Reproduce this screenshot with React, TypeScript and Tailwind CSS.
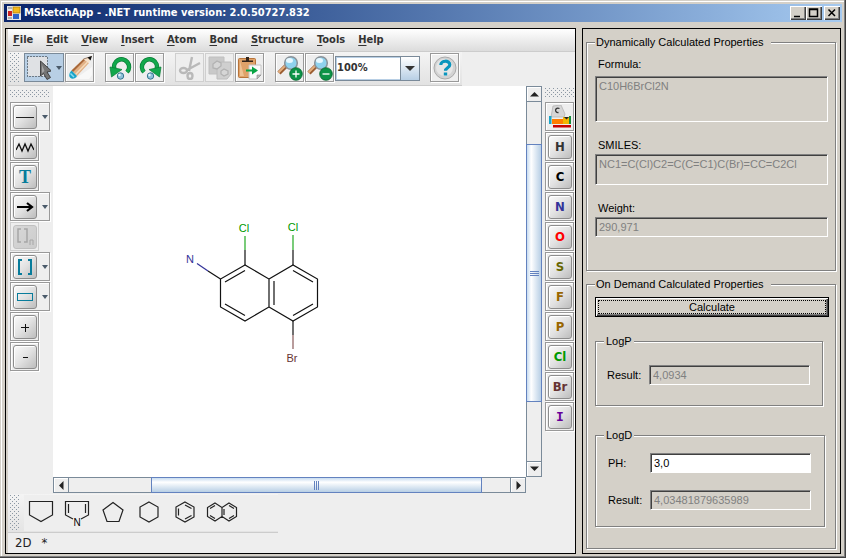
import type { ReactNode } from "react";

const UI = "font-['DejaVu_Sans_Condensed','DejaVu_Sans',sans-serif]";
const DOTS =
  "[background-image:conic-gradient(from_0deg_at_1px_1px,transparent_75%,#8b97a3_0),conic-gradient(from_0deg_at_1px_1px,transparent_75%,#8b97a3_0)] [background-size:4px_4px] [background-position:0_0,2px_2px]";
const SUNKEN =
  "block w-full border border-t-[#808080] border-l-[#808080] border-r-white border-b-white shadow-[inset_1px_1px_0_#404040] rounded-none outline-none resize-none text-[11px] leading-4 px-[3px] py-px";
const GROUP =
  "border border-[#808080] shadow-[inset_1px_1px_0_#fff,1px_1px_0_#fff]";

function ToolButton({
  label,
  children,
  disabled,
  menu,
  active,
}: {
  label: string;
  children: ReactNode;
  disabled?: boolean;
  menu?: boolean;
  active?: boolean;
}) {
  const look = active
    ? "border-[#7a8a99] bg-[#b8cfe5]"
    : disabled
      ? "border-[#cfcfcf] bg-[#eeeeee]"
      : "border-[#999999] bg-[#eeeeee] shadow-[1px_1px_0_#fff,inset_1px_1px_0_#fff]";
  return (
    <button
      aria-label={label}
      disabled={disabled}
      className={`flex h-[29px] shrink-0 items-center border pl-0.5 ${menu ? "w-10" : "w-[29px]"} ${look}`}
    >
      <span className="flex size-6 shrink-0 items-center justify-center">{children}</span>
      {menu && (
        <svg className="ml-[5px] shrink-0" width="6" height="4" viewBox="0 0 6 4">
          <path d="M0 0h6L3 4z" fill="#4a5a6a" />
        </svg>
      )}
    </button>
  );
}

function Cap({ children, disabled }: { children: ReactNode; disabled?: boolean }) {
  return (
    <span
      className={`flex size-6 items-center justify-center rounded-[3px] border bg-linear-to-br ${
        disabled
          ? "border-[#c0c0c0] from-[#d8d8d8] to-[#cccccc]"
          : "border-[#8c8c8c] from-[#fbfbfb] via-[#e2e2e2] to-[#bdbdbd] shadow-[inset_1px_1px_0_#fff]"
      }`}
    >
      {children}
    </span>
  );
}

function SelectIcon() {
  return (
    <svg width="24" height="24" viewBox="0 0 24 24">
      <rect x="1" y="1" width="19" height="19" fill="#dfe1e4" />
      <rect x="0.500" y="0.500" width="20" height="20" fill="none" stroke="#222" strokeDasharray="1 2" />
      <path d="M13.500 5v15l3-2.500 3.500 6 3.500-2-3.500-5.500 4.500-1z" fill="#757575" stroke="#3a3a3a" strokeWidth=".9" />
      <path d="M15 9v8l2.500-2z" fill="#a5a5a5" />
    </svg>
  );
}

function PencilIcon() {
  return (
    <svg width="24" height="24" viewBox="0 0 24 24">
      <path d="M7 23h14l3-4V11z" fill="#fff" opacity=".6" />
      <path d="M3.500 14.500L15.500 3l5.500 4L9 20z" fill="#e2b186" />
      <path d="M3.500 14.500L15.500 3l1.500 1L5 16z" fill="#a8683a" />
      <path d="M7 18L19 5.500l1 1L8 19z" fill="#f6dcbd" />
      <path d="M15.500 3l8-2.500L21 7z" fill="#f7e2cb" />
      <path d="M15.500 3l8-2.500" stroke="#6b4a33" strokeWidth=".7" />
      <path d="M19.500 1.500L24 0l-1.500 4.500z" fill="#111" />
      <path d="M3.500 14.500L9 20c-1.500 2.500-4.500 3.500-6.500 2S1 17 3.500 14.500z" fill="#19a3c9" />
      <path d="M2.500 17.500l3.500 3.500" stroke="#8edcee" strokeWidth="1.500" />
    </svg>
  );
}

function TurnIcon({ flip }: { flip?: boolean }) {
  return (
    <svg width="24" height="24" viewBox="0 0 24 24">
      <g transform={flip ? "translate(25 0) scale(-1 1)" : undefined}>
        <path d="M6.500 13.500A7.500 7.500 0 1 1 19 16" fill="none" stroke="#087c35" strokeWidth="4.500" />
        <path d="M6.500 13.500A7.500 7.500 0 1 1 19 16" fill="none" stroke="#12a84c" strokeWidth="3.200" />
        <path d="M2 11l12 2.500-10.500 7.500z" fill="#12a84c" stroke="#087c35" strokeWidth=".7" />
      </g>
      <circle cx="12.500" cy="20" r="3.200" fill="#8fc1d8" stroke="#36758f" />
      <circle cx="11.500" cy="19" r="1.200" fill="#e7f6fb" />
    </svg>
  );
}

function CutIcon() {
  return (
    <svg width="24" height="24" viewBox="0 0 24 24" fill="none" stroke="#b9b9b9" strokeWidth="2.400">
      <path d="M14 1L11 15M22 7L9 14" />
      <ellipse cx="5.500" cy="14.500" rx="3.500" ry="2.500" />
      <ellipse cx="12" cy="20" rx="2.500" ry="3" />
    </svg>
  );
}

function CopyIcon() {
  return (
    <svg width="24" height="24" viewBox="0 0 24 24">
      <path d="M1 1h15v17H1z" fill="#c9c9c9" stroke="#c0c0c0" />
      <path d="M9 6h14v12l-4 5H9z" fill="#cfcfcf" stroke="#bcbcbc" />
      <path d="M5 12V8l4-3 4 2v3l-4 3zM13 15l3-2 4 2v3l-4 2-3-2z" fill="#d6d6d6" stroke="#b2b2b2" strokeWidth="1.300" />
    </svg>
  );
}

function PasteIcon() {
  return (
    <svg width="24" height="24" viewBox="0 0 24 24">
      <rect x="0.500" y="2.500" width="17" height="19" rx="1" fill="#dfa269" stroke="#b8743a" />
      <path d="M2 5v15h4z" fill="#edc294" />
      <path d="M4 6V4.500h4V1h3v3.500h4V6z" fill="#33251b" />
      <path d="M11 9h12v10l-4 4h-8z" fill="#fbfbfb" stroke="#c4c4c4" />
      <path d="M19 23v-4h4z" fill="#bbb" stroke="#888" strokeWidth=".6" />
      <path d="M8 13.500h6v-3l6 4-6 4v-3H8z" fill="#08a443" />
    </svg>
  );
}

function ZoomIcon({ plus }: { plus?: boolean }) {
  return (
    <svg width="26" height="26" viewBox="0 0 26 26" className="-m-px shrink-0">
      <path d="M2 18l8-8" stroke="#9a5c30" strokeWidth="4.500" />
      <path d="M1.500 17.500l8-8" stroke="#e4b080" strokeWidth="2" />
      <circle cx="14" cy="8" r="6.300" fill="#8fd2ee" stroke="#8a9299" strokeWidth="1.500" />
      <ellipse cx="12.500" cy="5.500" rx="3.500" ry="2.500" fill="#e8f8ff" />
      <circle cx="19" cy="19" r="6.300" fill="#0c9347" stroke="#08642f" strokeWidth=".8" />
      <path d={plus ? "M15.500 19h7M19 15.500v7" : "M15.500 19h7"} stroke="#fff" strokeWidth="1.300" />
    </svg>
  );
}

function HelpIcon() {
  return (
    <svg width="24" height="24" viewBox="0 0 24 24">
      <circle cx="12" cy="12" r="11" fill="#d3d3d3" stroke="#ababab" />
      <circle cx="11.500" cy="11.500" r="8.500" fill="#e6e6e6" />
      <path d="M7.800 9c0-5 9-5 9-.2 0 3-4.300 3-4.300 6" fill="none" stroke="#0a95bd" strokeWidth="3.200" />
      <rect x="10.800" y="16.500" width="3.400" height="3" fill="#0a95bd" />
    </svg>
  );
}

function TableIcon() {
  return (
    <svg width="24" height="24" viewBox="0 0 24 24">
      <path d="M5 1l8-1 4 9-1 3H3z" fill="#d6d6d6" stroke="#b4b4b4" strokeWidth=".8" />
      <path d="M11.500 3.500C7 1.500 6 8 10.500 7.500" fill="none" stroke="#333" strokeWidth="1.300" />
      <path d="M1 11h2.500v8H1z" fill="#1aa5c8" />
      <path d="M4 14h12v5H4z" fill="#ff7d00" />
      <path d="M15 12h6v7h-6z" fill="#f2b500" />
      <path d="M21 11h2v8h-2z" fill="#188c3c" />
      <path d="M16 12l2.500 2.500L21 12z" fill="#222" />
      <path d="M5 20h18v2.500H5z" fill="#c90000" />
    </svg>
  );
}

const MENU = ["File", "Edit", "View", "Insert", "Atom", "Bond", "Structure", "Tools", "Help"];

const ATOMS: [string, string][] = [
  ["H", "text-[#333333]"],
  ["C", "text-black"],
  ["N", "text-[#333399]"],
  ["O", "text-[#ff0000]"],
  ["S", "text-[#666600]"],
  ["F", "text-[#996600]"],
  ["P", "text-[#996600]"],
  ["Cl", "text-[#009900]"],
  ["Br", "text-[#663333]"],
  ["I", "text-[#660099]"],
];

function DrawingTools() {
  return (
    <div className="flex w-[45px] shrink-0 flex-col gap-px pt-1 pl-0.5">
      <div className={`mb-[3px] h-2 w-10 ${DOTS}`} />
      <ToolButton label="Bond" menu>
        <Cap>
          <svg width="18" height="18"><path d="M0 9.500h18" stroke="#222" /></svg>
        </Cap>
      </ToolButton>
      <ToolButton label="Chain">
        <Cap>
          <svg width="18" height="18">
            <path d="M0 12l3-6 3 7 3-7 3 7 3-7 3 6" fill="none" stroke="#111" strokeWidth="1.300" />
          </svg>
        </Cap>
      </ToolButton>
      <ToolButton label="Text">
        <Cap>
          <span className="font-['Liberation_Serif',serif] text-lg leading-5 font-bold text-[#087c9b]">T</span>
        </Cap>
      </ToolButton>
      <ToolButton label="Arrow" menu>
        <Cap>
          <svg width="18" height="18">
            <path d="M1 9h15M11 5l5 4-5 4" fill="none" stroke="#000" strokeWidth="2.200" />
          </svg>
        </Cap>
      </ToolButton>
      <ToolButton label="Repeating group" disabled>
        <Cap disabled>
          <svg width="20" height="20" fill="none" stroke="#a6a6a6" strokeWidth="1.500">
            <path d="M6 2H3v13h3M9 2h3v13H9" />
            <path d="M15 18v-5h3v5" strokeWidth="1" />
          </svg>
        </Cap>
      </ToolButton>
      <ToolButton label="Bracket" menu>
        <Cap>
          <svg width="18" height="18" fill="none" stroke="#087c9b" strokeWidth="2">
            <path d="M6 2H3v14h3M12 2h3v14h-3" />
          </svg>
        </Cap>
      </ToolButton>
      <ToolButton label="Rectangle" menu>
        <Cap>
          <svg width="18" height="18">
            <rect x="1.500" y="5.500" width="15" height="7" fill="none" stroke="#087c9b" />
          </svg>
        </Cap>
      </ToolButton>
      <ToolButton label="Increase charge">
        <Cap>
          <svg width="18" height="18"><path d="M5 9.500h8M9.500 6v8" stroke="#111" /></svg>
        </Cap>
      </ToolButton>
      <ToolButton label="Decrease charge">
        <Cap>
          <svg width="18" height="18"><path d="M7 9.500h5" stroke="#111" /></svg>
        </Cap>
      </ToolButton>
    </div>
  );
}

function AtomTools() {
  return (
    <div className="flex w-[33px] shrink-0 flex-col gap-px pt-0.5 pl-[3px]">
      <div className={`mb-[3px] h-2.5 w-[30px] ${DOTS}`} />
      <ToolButton label="Periodic table">
        <TableIcon />
      </ToolButton>
      {ATOMS.map(([symbol, color]) => (
        <ToolButton key={symbol} label={symbol}>
          <Cap>
            <span
              className={`text-[13px] leading-4 font-bold ${color} ${
                symbol === "I" ? "font-['DejaVu_Sans_Mono',monospace]" : UI
              }`}
            >
              {symbol}
            </span>
          </Cap>
        </ToolButton>
      ))}
    </div>
  );
}

function Molecule() {
  return (
    <svg width="473" height="391" viewBox="53 86 473 391" className="block" fill="none">
      <g stroke="#111" strokeWidth="1.200">
        <path d="M245 265L220.500 279V307L245 321L269 307V279zM269 279L293 265L317.500 279V307L293 321L269 307" />
        <path d="M225 282L245 270.500M225 304L245 315.500M274 281V305M293 270.500L313 282M313 304L293 315.500" />
        <path d="M245 265V250M293 265V250M293 321V335M220.500 279L208 271" />
      </g>
      <path d="M245 250V236M293 250V235" stroke="#22aa22" strokeWidth="1.200" />
      <path d="M293 335V349" stroke="#8a5a5a" strokeWidth="1.200" />
      <path d="M208 271L197 263.500" stroke="#333399" strokeWidth="1.200" />
      <g className="font-['Liberation_Sans',Arial,sans-serif] text-[11px]" textAnchor="middle">
        <text x="244" y="232" fill="#009900">Cl</text>
        <text x="293" y="231" fill="#009900">Cl</text>
        <text x="190" y="263" fill="#333399">N</text>
        <text x="292" y="362" fill="#663333">Br</text>
      </g>
    </svg>
  );
}

function ArrowGlyph({ d }: { d: string }) {
  return (
    <svg width="9" height="9" viewBox="0 0 9 9">
      <path d={d} fill="#222" />
    </svg>
  );
}

function VerticalScroll() {
  return (
    <div className="flex w-4 shrink-0 flex-col border border-[#7a8a99] bg-[#eeeeee]">
      <button aria-label="Scroll up" className="flex h-[15px] items-center justify-center border-b border-[#7a8a99] shadow-[inset_1px_1px_0_#fff]">
        <ArrowGlyph d="M0 6.500h9L4.500 2z" />
      </button>
      <div className="flex-[42]" />
      <div className="-mx-px flex flex-[257] flex-col items-center justify-center gap-px border border-[#6382bf] bg-linear-to-r from-[#c8dcf0] via-white via-30% to-[#b8cfe5]">
        <i className="h-px w-[9px] bg-[#6382bf]" />
        <i className="h-px w-[9px] bg-[#6382bf]" />
        <i className="h-px w-[9px] bg-[#6382bf]" />
      </div>
      <div className="flex-[59]" />
      <button aria-label="Scroll down" className="flex h-[15px] items-center justify-center border-t border-[#7a8a99] shadow-[inset_1px_1px_0_#fff]">
        <ArrowGlyph d="M0 2.500h9L4.500 7z" />
      </button>
    </div>
  );
}

function HorizontalScroll() {
  return (
    <div className="flex h-[17px] shrink-0 pb-px">
      <div className="flex min-w-0 flex-1 border border-[#7a8a99] bg-[#eeeeee]">
        <button aria-label="Scroll left" className="flex w-[15px] items-center justify-center border-r border-[#7a8a99] shadow-[inset_1px_1px_0_#fff]">
          <ArrowGlyph d="M6.500 0v9L2 4.500z" />
        </button>
        <div className="flex-[82]" />
        <div className="-my-px flex flex-[330] items-center justify-center gap-px border border-[#6382bf] bg-linear-to-b from-[#c8dcf0] via-white via-30% to-[#b8cfe5]">
          <i className="h-[9px] w-px bg-[#6382bf]" />
          <i className="h-[9px] w-px bg-[#6382bf]" />
          <i className="h-[9px] w-px bg-[#6382bf]" />
        </div>
        <div className="flex-[28]" />
        <button aria-label="Scroll right" className="flex w-[15px] items-center justify-center border-l border-[#7a8a99] shadow-[inset_1px_1px_0_#fff]">
          <ArrowGlyph d="M2.500 0v9L7 4.500z" />
        </button>
      </div>
      <div className="w-4 shrink-0" />
    </div>
  );
}

const TEMPLATES: [string, ReactNode][] = [
  ["Cyclopentane, flat top", <path d="M1.500 3.500H24.500V17L13 23.500L1.500 17z" />],
  [
    "Pyrrole",
    <>
      <path d="M9 21L1.500 17V3.500H24.500V17L17 21M4.500 6V15M21.500 6V15" />
      <text x="13" y="28" textAnchor="middle" fill="#000" stroke="none" className="font-['Liberation_Sans',Arial,sans-serif] text-[10px]">N</text>
    </>,
  ],
  ["Cyclopentane", <path d="M13 4.500L23 12L19 23.500H7L3 12z" />],
  ["Cyclohexane", <path d="M13 4L22 9V19L13 24L4 19V9z" />],
  ["Benzene", <path d="M13 4L22 9V19L13 24L4 19V9zM6.500 10.500V17.500M13 7L19.500 10.500M19.500 17.500L13 21" />],
];

function TemplateBar() {
  return (
    <div className="flex h-[39px] w-[270px] shrink-0 items-center border-b border-[#cccccc] bg-linear-to-b from-[#f4f4f4] to-[#e4e4e4] pl-0.5">
      <div className={`mr-1 h-9 w-2.5 ${DOTS}`} />
      <div className="flex h-9 flex-1 items-center gap-2.5 bg-[#eeeeee] pb-0.5 pl-1">
        {TEMPLATES.map(([name, shape]) => (
          <button key={name} aria-label={name} className="shrink-0">
            <svg width="26" height="28" fill="none" stroke="#222" strokeWidth="1.200" className="block overflow-visible">
              {shape}
            </svg>
          </button>
        ))}
        <button aria-label="Naphthalene" className="shrink-0">
          <svg width="32" height="28" fill="none" stroke="#222" strokeWidth="1.200" className="block overflow-visible">
            <path d="M7 5L14 9.500V18.500L7 23L-.5 18.500V9.500zM21 5L28.500 9.500V18.500L21 23L14 18.500V9.500z" />
            <path d="M2 10.500L7 7.500M2 17.500L7 20.500M16 11V17M21 7.500L26 10.500M21 20.500L26 17.500" />
          </svg>
        </button>
      </div>
    </div>
  );
}

function Sketcher() {
  return (
    <section className={`flex min-w-0 flex-1 flex-col border border-black bg-[#eeeeee] ${UI}`}>
      <div className="flex min-h-0 flex-1 flex-col border-l-2 border-[#d4d0c8]">
        <nav className="flex h-[23px] shrink-0 items-center gap-[13px] border-b border-[#cccccc] bg-linear-to-b from-white to-[#dcdcdc] pl-[5px]">
          {MENU.map((m) => (
            <button key={m} className="text-[11px] leading-4 font-bold text-[#333333]">
              <span className="underline underline-offset-2">{m[0]}</span>
              {m.slice(1)}
            </button>
          ))}
        </nav>
        <div className="flex h-[34px] w-[454px] shrink-0 items-start gap-px border-b border-[#cccccc] bg-linear-to-b from-[#f4f4f4] to-[#e2e2e2] pt-px pl-0.5">
          <div className={`mr-[3px] h-[30px] w-2.5 ${DOTS}`} />
          <ToolButton label="Select" menu active><SelectIcon /></ToolButton>
          <ToolButton label="Draw"><PencilIcon /></ToolButton>
          <div className="w-[9px]" />
          <ToolButton label="Undo"><TurnIcon /></ToolButton>
          <ToolButton label="Redo"><TurnIcon flip /></ToolButton>
          <div className="w-[9px]" />
          <ToolButton label="Cut" disabled><CutIcon /></ToolButton>
          <ToolButton label="Copy" disabled><CopyIcon /></ToolButton>
          <ToolButton label="Paste"><PasteIcon /></ToolButton>
          <div className="w-[9px]" />
          <ToolButton label="Zoom in"><ZoomIcon plus /></ToolButton>
          <ToolButton label="Zoom out"><ZoomIcon /></ToolButton>
          <div className="relative mt-[3px] w-[85px] shrink-0">
            <select
              aria-label="Zoom level"
              className="block h-[25px] w-full appearance-none border border-[#7a8a99] bg-white pl-px text-[11px] font-bold text-[#333333] shadow-[inset_0_0_0_1px_#b8cfe5]"
            >
              <option>100%</option>
            </select>
            <span className="pointer-events-none absolute inset-y-0 right-0 flex w-5 items-center justify-center border border-[#7a8a99] bg-linear-to-b from-white to-[#b8cfe5]">
              <svg width="10" height="5"><path d="M0 0h10L5 5z" fill="#333" /></svg>
            </span>
          </div>
          <div className="w-2" />
          <ToolButton label="Help"><HelpIcon /></ToolButton>
        </div>
        <div className="flex min-h-0 flex-1">
          <DrawingTools />
          <div className="flex min-w-0 flex-1 flex-col">
            <div className="flex min-h-0 flex-1">
              <div className="min-w-0 flex-1 overflow-hidden bg-white">
                <Molecule />
              </div>
              <VerticalScroll />
            </div>
            <HorizontalScroll />
          </div>
          <AtomTools />
        </div>
        <TemplateBar />
        <div className="flex h-5 shrink-0 items-center gap-2.5 pl-[7px] text-[13px] leading-4 text-[#222222]">
          <span>2D</span>
          <span>*</span>
        </div>
      </div>
    </section>
  );
}

function Properties() {
  return (
    <section className="flex w-[259px] shrink-0 flex-col border border-black pt-1.5 pr-1 pl-[3px] font-['Liberation_Sans',Arial,sans-serif] text-[11px] leading-[14px] text-black">
      <fieldset className={`h-[236px] pr-[7px] pl-2 ${GROUP}`}>
        <legend className="w-[176px] bg-[#d4d0c8] pl-px leading-[14px] whitespace-nowrap">
          Dynamically Calculated Properties
        </legend>
        <label htmlFor="formula" className="mt-2 mb-[5px] block pl-[3px]">Formula:</label>
        <textarea id="formula" disabled value="C10H6BrCl2N" className={`h-[46px] text-[#808080] ${SUNKEN}`} />
        <label htmlFor="smiles" className="mt-4 mb-0.5 block pl-[3px]">SMILES:</label>
        <textarea id="smiles" disabled value="NC1=C(Cl)C2=C(C=C1)C(Br)=CC=C2Cl" className={`h-[31px] text-[#808080] ${SUNKEN}`} />
        <label htmlFor="weight" className="mt-4 mb-0.5 block pl-[3px]">Weight:</label>
        <input id="weight" disabled value="290,971" className={`h-5 text-[#808080] ${SUNKEN}`} />
      </fieldset>
      <fieldset className={`mt-1.5 mb-1 flex-1 pr-1.5 pl-2 ${GROUP}`}>
        <legend className="w-[176px] bg-[#d4d0c8] pl-px leading-[14px] whitespace-nowrap">
          On Demand Calculated Properties
        </legend>
        <button className="mt-1.5 block h-5 w-full border border-black p-0.5 shadow-[inset_1px_1px_0_#fff,inset_-1px_-1px_0_#404040,inset_-2px_-2px_0_#808080]">
          <span className="flex h-3.5 items-center justify-center border border-dotted border-black">Calculate</span>
        </button>
        <fieldset className={`mt-[17px] mr-1.5 h-[72px] pl-2 ${GROUP}`}>
          <legend className="bg-[#d4d0c8] px-0.5 leading-[14px]">LogP</legend>
          <div className="mt-[17px] flex items-center pl-[3px]">
            <label htmlFor="logp" className="w-[42px]">Result:</label>
            <div className="w-[161px]">
              <input id="logp" disabled value="4,0934" className={`h-5 text-[#808080] ${SUNKEN}`} />
            </div>
          </div>
        </fieldset>
        <fieldset className={`mt-[22px] mr-1 h-[99px] pl-2 ${GROUP}`}>
          <legend className="bg-[#d4d0c8] px-0.5 leading-[14px]">LogD</legend>
          <div className="mt-[11px] flex items-center pl-1">
            <label htmlFor="ph" className="w-[42px]">PH:</label>
            <div className="w-[161px]">
              <input id="ph" defaultValue="3,0" className={`h-5 bg-white ${SUNKEN}`} />
            </div>
          </div>
          <div className="mt-[17px] flex items-center pl-1">
            <label htmlFor="logd" className="w-[42px]">Result:</label>
            <div className="w-[161px]">
              <input id="logd" disabled value="4,03481879635989" className={`h-5 text-[#808080] ${SUNKEN}`} />
            </div>
          </div>
        </fieldset>
      </fieldset>
    </section>
  );
}

function WindowButton({ label, d }: { label: string; d: string }) {
  return (
    <button
      aria-label={label}
      className="h-3.5 w-4 bg-[#d4d0c8] shadow-[inset_1px_1px_0_#fff,inset_-1px_-1px_0_#404040,inset_-2px_-2px_0_#808080]"
    >
      <svg width="16" height="14" fill="none" stroke="#000" className="block">
        <path d={d} strokeWidth="1.500" />
      </svg>
    </button>
  );
}

export default function App() {
  return (
    <div className="flex h-screen min-h-[558px] w-full flex-col bg-[#d4d0c8] px-1 py-1 shadow-[inset_-1px_-1px_0_#404040,inset_-2px_-2px_0_#808080,inset_1px_1px_0_#d4d0c8,inset_2px_2px_0_#fff]">
      <header className={`flex h-[18px] shrink-0 items-center bg-linear-to-r from-[#0a246a] to-[#a6caf0] pr-0.5 pl-[3px] ${UI}`}>
        <svg width="14" height="14" viewBox="0 0 14 14">
          <rect width="14" height="14" fill="#e8e8e8" />
          <rect x="1" y="5" width="4" height="5" fill="#c22" />
          <rect x="6" y="1" width="7" height="6" fill="#f4b91c" stroke="#a87808" strokeWidth=".7" />
          <rect x="6" y="8" width="6" height="5" fill="#2c62c8" />
          <path d="M1 2h4M1 12h4" stroke="#777" />
        </svg>
        <h1 className="ml-[3px] flex-1 text-[11px] leading-4 font-bold text-white">
          MSketchApp - .NET runtime version: 2.0.50727.832
        </h1>
        <WindowButton label="Minimize" d="M4 10.500h6" />
        <WindowButton label="Maximize" d="M3.500 3h8v7.500h-8zM3 3.500h9" />
        <div className="w-0.5" />
        <WindowButton label="Close" d="M4.500 3.500l6.500 6.500M11 3.500l-6.500 6.500" />
      </header>
      <main className="mt-1.5 flex min-h-0 flex-1 gap-1.5 pr-px pl-px">
        <Sketcher />
        <Properties />
      </main>
    </div>
  );
}
